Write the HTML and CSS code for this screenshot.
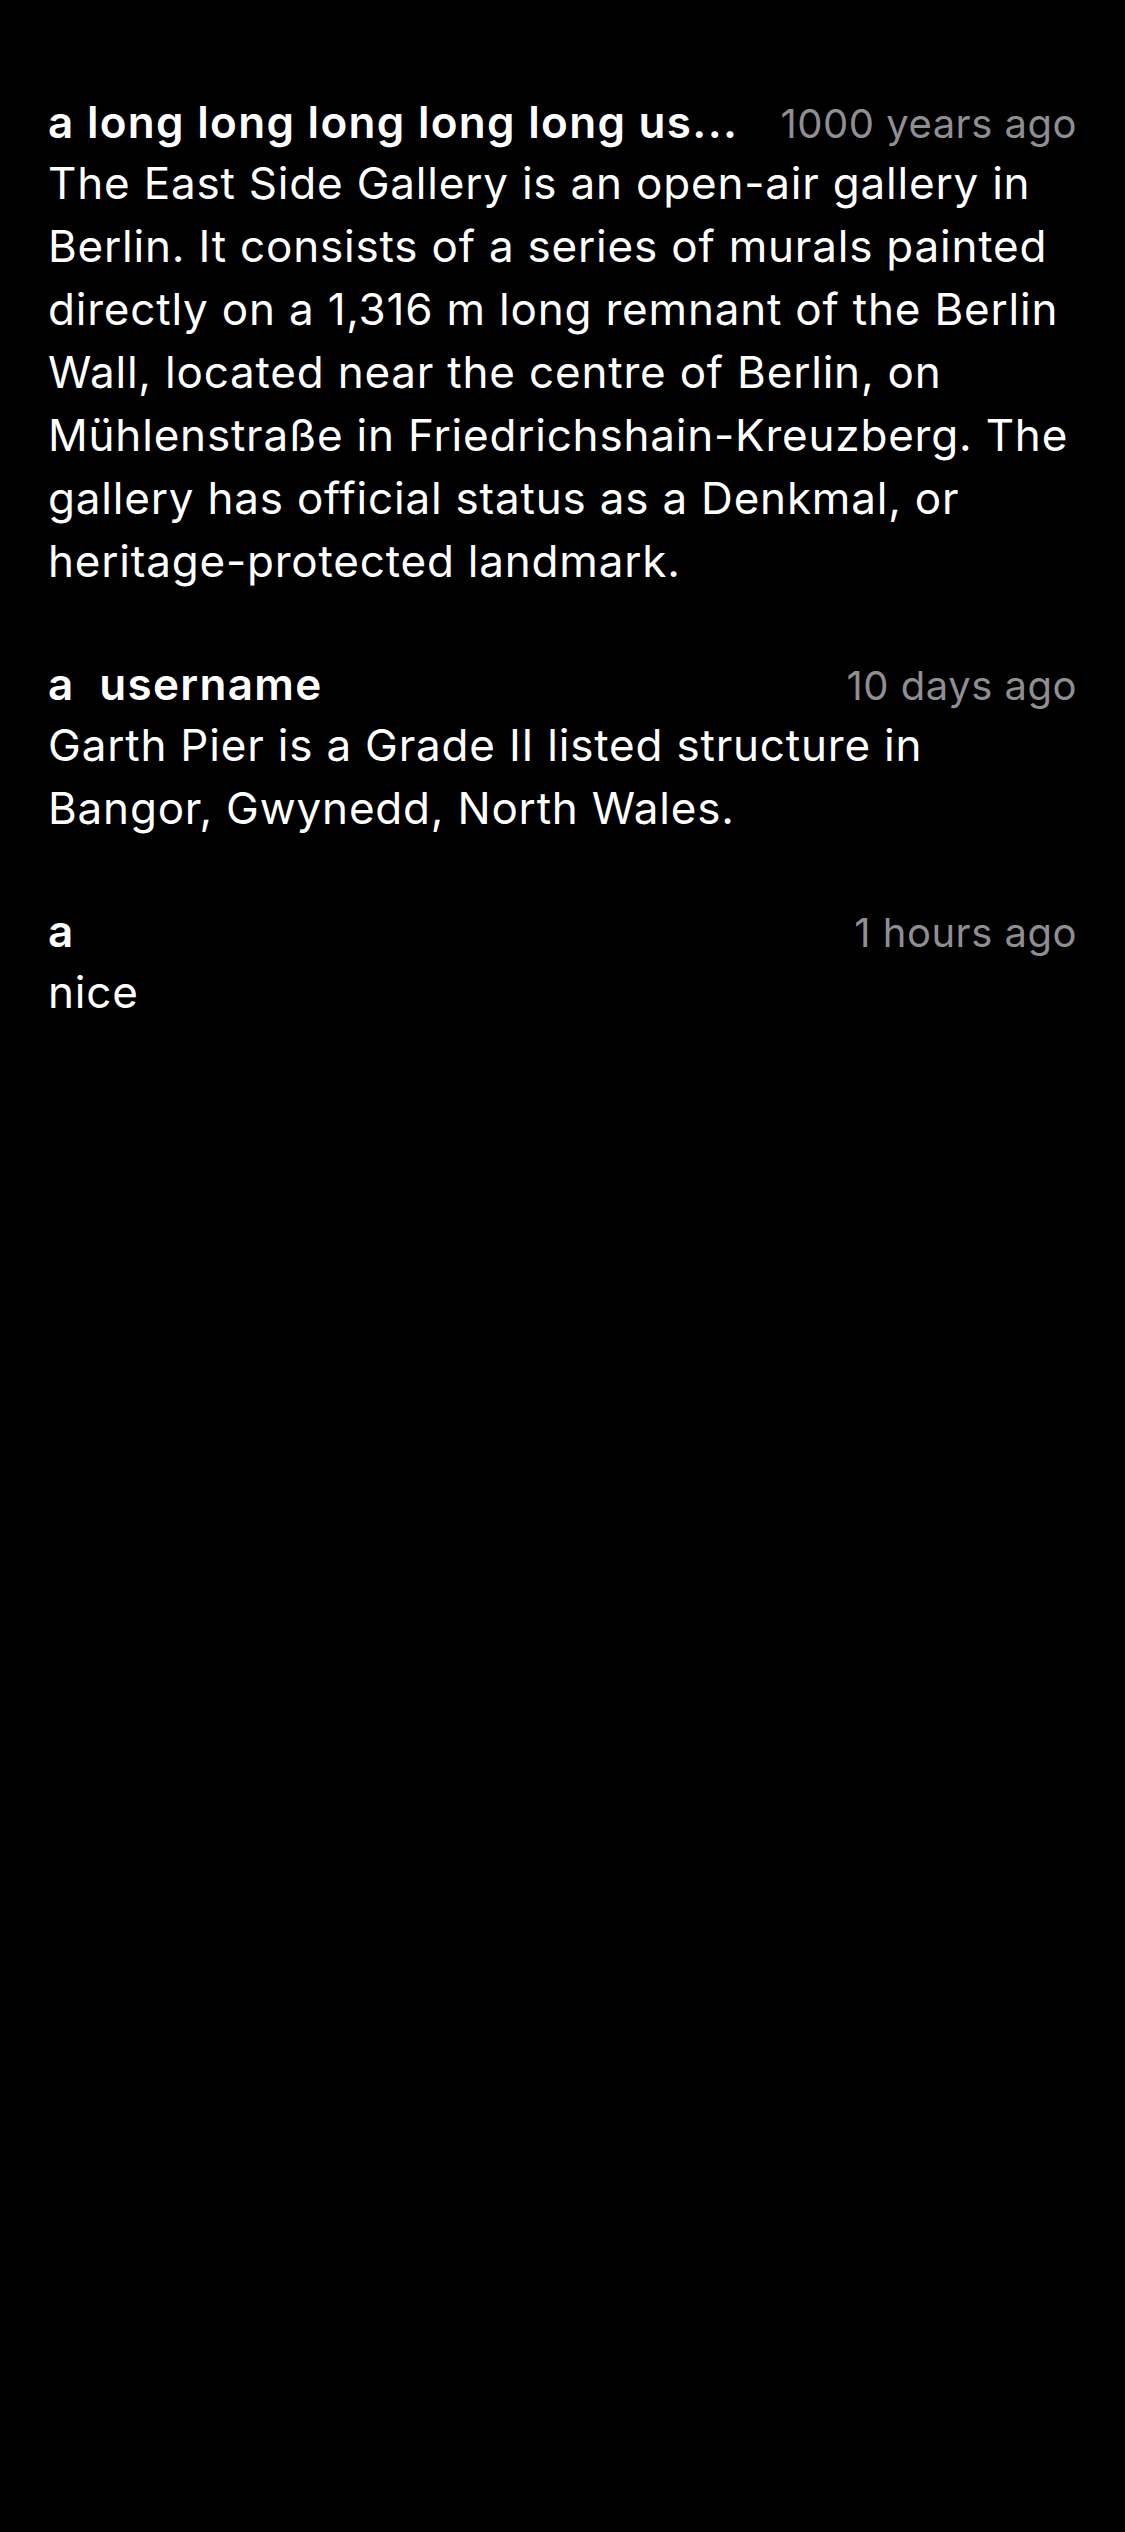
FILE: index.html
```html
<!DOCTYPE html>
<html lang="en">
<head>
<meta charset="utf-8">
<title>Comments</title>
<link rel="stylesheet" href="styles.css">
</head>
<body>
<main class="comments">
  <article class="comment">
    <header class="comment-head">
      <span class="comment-user">a long long long long long us...</span>
      <span class="comment-time">1000 years ago</span>
    </header>
    <p class="comment-body">The East Side Gallery is an open-air gallery in Berlin. It consists of a series of murals painted directly on a 1,316 m long remnant of the Berlin Wall, located near the centre of Berlin, on Mühlenstraße in Friedrichshain-Kreuzberg. The gallery has official status as a Denkmal, or heritage-protected landmark.</p>
  </article>
  <article class="comment">
    <header class="comment-head">
      <span class="comment-user">a  username</span>
      <span class="comment-time">10 days ago</span>
    </header>
    <p class="comment-body">Garth Pier is a Grade II listed structure in Bangor, Gwynedd, North Wales.</p>
  </article>
  <article class="comment">
    <header class="comment-head">
      <span class="comment-user">a</span>
      <span class="comment-time">1 hours ago</span>
    </header>
    <p class="comment-body">nice</p>
  </article>
</main>
</body>
</html>
```

FILE: styles.css
```css
html, body {
  margin: 0;
  padding: 0;
  background: #000;
}

body {
  width: 1125px;
  min-height: 2532px;
  font-family: Inter, "Noto Sans", "Liberation Sans", sans-serif;
  color: #fff;
}

.comments {
  display: flex;
  flex-direction: column;
  gap: 63px;
  padding: 94px 48px 0 48px;
}

.comment {
  display: flex;
  flex-direction: column;
}

.comment-head {
  display: flex;
  align-items: baseline;
  justify-content: space-between;
  gap: 40px;
  line-height: 57px;
}

.comment-user {
  flex: 0 1 auto;
  min-width: 0;
  font-size: 44px;
  font-weight: 600;
  letter-spacing: 1.3px;
  white-space: pre;
  overflow: hidden;
}

.comment-time {
  flex: 0 0 auto;
  font-size: 40px;
  letter-spacing: 0.5px;
  color: #8e8e93;
}

.comment-body {
  margin: 0;
  font-size: 44px;
  letter-spacing: 0.8px;
  line-height: 63px;
}
```
